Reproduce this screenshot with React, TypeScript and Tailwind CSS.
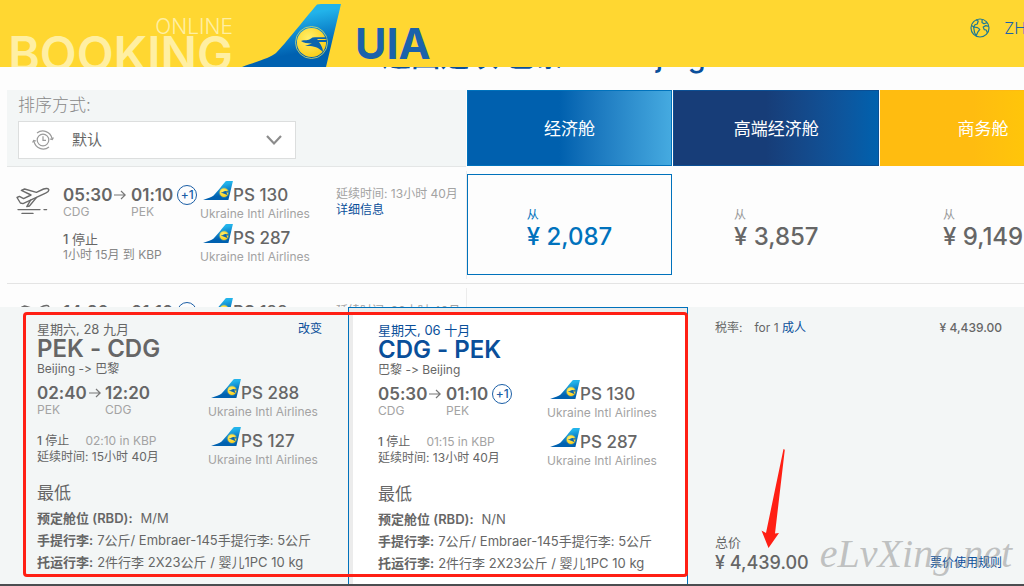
import type { ReactNode } from 'react';
import clsx from 'clsx';

type Flight = { number: string };

type Leg = {
    depart: string;
    from: string;
    arrive: string;
    to: string;
    plusDays?: string;
};

type TripLeg = Leg & {
    date: string;
    fromCity: string;
    toCity: string;
    stopTime: string;
    duration: string;
    flights: Flight[];
    rbd: string;
    active?: boolean;
};

const trips: TripLeg[] = [
    {
        date: '星期六, 28 九月',
        from: 'PEK',
        to: 'CDG',
        fromCity: 'Beijing',
        toCity: '巴黎',
        depart: '02:40',
        arrive: '12:20',
        stopTime: '02:10 in KBP',
        duration: '15小时 40月',
        flights: [{ number: 'PS 288' }, { number: 'PS 127' }],
        rbd: 'M/M',
    },
    {
        date: '星期天, 06 十月',
        from: 'CDG',
        to: 'PEK',
        fromCity: '巴黎',
        toCity: 'Beijing',
        depart: '05:30',
        arrive: '01:10',
        plusDays: '+1',
        stopTime: '01:15 in KBP',
        duration: '13小时 40月',
        flights: [{ number: 'PS 130' }, { number: 'PS 287' }],
        rbd: 'N/N',
        active: true,
    },
];

const results = [
    {
        leg: { depart: '05:30', from: 'CDG', arrive: '01:10', to: 'PEK', plusDays: '+1' },
        stop: '1小时 15月 到 KBP',
        duration: '13小时 40月',
        flights: [{ number: 'PS 130' }, { number: 'PS 287' }],
        prices: ['2,087', '3,857', '9,149'],
        selected: 0,
    },
    {
        leg: { depart: '14:20', from: 'CDG', arrive: '01:10', to: 'PEK', plusDays: '+2' },
        stop: '15小时 55月 到 KBP',
        duration: '28小时 40月',
        flights: [{ number: 'PS 128' }, { number: 'PS 287' }],
        prices: ['2,087', '3,857', '9,149'],
        selected: -1,
    },
];

const resultGrid = 'grid grid-cols-[459fr_206fr_206fr_206fr] gap-x-px';

function TailLogo({ className }: { className?: string }) {
    return (
        <svg viewBox="0 0 99 63" className={className} aria-hidden="true">
            <defs>
                <linearGradient id="tail" x1="0.45" y1="0" x2="0.75" y2="1">
                    <stop offset="0.2" stopColor="#22b3ea" />
                    <stop offset="0.55" stopColor="#0a7cc6" />
                    <stop offset="0.75" stopColor="#0061b0" />
                </linearGradient>
                <radialGradient id="ball" cx="0.4" cy="0.35" r="0.8">
                    <stop offset="0" stopColor="#fff06a" />
                    <stop offset="1" stopColor="#fbc70a" />
                </radialGradient>
            </defs>
            <path d="M75 0.5 Q77 0 79 0 H99 L84 63 H0 C16 57 28 54 34 49 C44 39 60 18 75 0.5Z" fill="url(#tail)" />
            <circle cx="69.5" cy="38.5" r="16" fill="none" stroke="#d9de6b" strokeWidth="0.8" />
            <circle cx="69.5" cy="38.5" r="14.6" fill="url(#ball)" />
            <path
                d="M59 37 C63 35.5 66 37 69 34.5 Q70 33.3 73 33.3 H84.5 V35 H76 L75 36 H84.8 V38 H77 C79 41 81 44 81 48 C76 42.5 70 41.5 63 42 L70 39.4 C66 39.5 62 39 59 37Z"
                fill="#0a64ad"
            />
        </svg>
    );
}

function GlobeIcon() {
    return (
        <svg viewBox="0 0 20 20" className="size-5 shrink-0" fill="none" stroke="#1f7a93" strokeWidth="1.2" strokeLinejoin="round" aria-hidden="true">
            <circle cx="10" cy="10" r="9" />
            <path d="M6.2 2 L8.2 3 L7.3 6 L5 6.8 L4 8.8 L1.3 7.6" />
            <path d="M3.6 9 L7.6 9.6 L9.8 11.4 L7.6 14.4 L6.2 17.8 L4.6 14.8 Z" />
            <path d="M12.2 1.4 L12 4.4 L14 5.8 L17 4.6 M18.8 8.4 L15.8 7.6 L13.2 9 L14.2 11.6 L16.2 12 L17.4 14.8" />
        </svg>
    );
}

function ClockIcon() {
    return (
        <svg viewBox="0 0 22 22" className="pointer-events-none absolute left-[14px] top-2 size-[22px]" fill="none" stroke="#9b9b9b" strokeWidth="1.2" aria-hidden="true">
            <circle cx="11" cy="11" r="5.8" />
            <path d="M11 7.2 V11.4 H14" />
            <path d="M5 4 A9.4 9.4 0 0 1 20 9.6 M18 10 L20.3 10.6 L21.4 8.4" />
            <path d="M17 18 A9.4 9.4 0 0 1 2 12.4 M0.6 13.6 L1.7 11.4 L4 12" />
        </svg>
    );
}

function PlaneIcon() {
    return (
        <svg viewBox="0 0 34 28" className="mt-5 h-7 w-[34px] shrink-0" fill="none" stroke="#6b6b6b" strokeWidth="1.4" strokeLinejoin="round" strokeLinecap="round" aria-hidden="true">
            <path d="M1 10.5 L3.4 9.4 L7.6 11.6 L15 8 L5.4 3.4 L8.6 2 L20.4 5.4 L27.6 2 C30 1 32.4 1.4 32.8 2.6 C33.2 4 31.4 5.2 29.6 6.2 L7 16.6 L4.4 16 Z" />
            <path d="M20.4 10.6 L13.4 19 L10.8 19.6 L14.6 13.2" />
            <path d="M2 22.6 H24 M28 22.6 H30.6 M6 26.4 H17" />
        </svg>
    );
}

function Arrow() {
    return (
        <svg viewBox="0 0 12 10" className="h-2.5 w-3" fill="none" stroke="#777" strokeWidth="1.2" aria-hidden="true">
            <path d="M0 5 H11 M7 1 L11.2 5 L7 9" />
        </svg>
    );
}

function LegTimes({ leg }: { leg: Leg }) {
    return (
        <div className="grid grid-cols-[68px_1fr]">
            <div className="flex items-center gap-0.5 text-[17px] font-semibold leading-5">
                {leg.depart}
                <Arrow />
            </div>
            <div className="flex h-5 items-center gap-1 text-[17px] font-semibold leading-5">
                {leg.arrive}
                {leg.plusDays && (
                    <span className="flex size-5 shrink-0 items-center justify-center rounded-full border border-[#1a5ea6] text-xs font-medium text-[#1a5ea6]">
                        {leg.plusDays}
                    </span>
                )}
            </div>
            <div className="text-xs leading-[14px] text-[#a3a3a3]">{leg.from}</div>
            <div className="text-xs leading-[14px] text-[#a3a3a3]">{leg.to}</div>
        </div>
    );
}

function FlightNumber({ number }: Flight) {
    return (
        <div>
            <div className="flex h-6 items-end pl-[3px]">
                <TailLogo className="h-[19px] w-[30px] shrink-0 self-start" />
                <span className="whitespace-nowrap text-[17px] font-medium leading-5">{number}</span>
            </div>
            <div className="whitespace-nowrap text-xs leading-[18px] text-[#a3a3a3]">Ukraine Intl Airlines</div>
        </div>
    );
}

function CabinHeader({ className, children }: { className: string; children: ReactNode }) {
    return (
        <div className={clsx('mb-px flex items-center justify-center border pt-1 text-[17px] text-white', className)}>
            {children}
        </div>
    );
}

function PriceButton({ price, selected }: { price: string; selected: boolean }) {
    return (
        <button
            type="button"
            className={clsx(
                'my-[7px] flex h-[101px] items-center justify-center border pt-2 text-left',
                selected ? 'border-[#0072bc] text-[#0072bc]' : 'border-transparent text-[#666]',
            )}
        >
            <span>
                <span className={clsx('block text-xs leading-4', !selected && 'text-[#999]')}>从</span>
                <span className="block whitespace-pre text-2xl font-medium leading-7">¥ {price}</span>
            </span>
        </button>
    );
}

function TripSummary({ trip }: { trip: TripLeg }) {
    return (
        <section
            className={clsx(
                'pb-2.5 pr-[26px]',
                trip.active
                    ? 'border-x border-t border-[#0072bc] bg-white pl-[29px] shadow-[inset_4px_6px_0_#ececec]'
                    : 'pl-[37px]',
            )}
        >
            <div className="flex justify-between pt-3.5 text-[13px] leading-4">
                <span className={clsx(trip.active && 'text-[#0a4f9a]')}>{trip.date}</span>
                {!trip.active && (
                    <a href="#change" className="text-xs leading-4 text-[#0a4f9a]">
                        改变
                    </a>
                )}
            </div>
            <h2 className={clsx('text-2xl font-semibold leading-6', trip.active && 'text-[#0a4f9a]')}>
                {trip.from} - {trip.to}
            </h2>
            <p className="text-xs leading-4">
                {trip.fromCity} -&gt; {trip.toCity}
            </p>
            <div className="flex justify-between">
                <div className="pt-1.5">
                    <LegTimes leg={trip} />
                    <div className="mt-4 flex gap-4 text-xs leading-4">
                        <span>
                            <span className="font-medium">1</span> 停止
                        </span>
                        <span className="text-[#a3a3a3]">{trip.stopTime}</span>
                    </div>
                    <div className="text-xs leading-4">延续时间: {trip.duration}</div>
                </div>
                <div className="flex w-[114px] flex-col gap-1.5 pt-0.5">
                    {trip.flights.map((flight) => (
                        <FlightNumber key={flight.number} number={flight.number} />
                    ))}
                </div>
            </div>
            <h3 className="mt-3 text-[17px] leading-6">最低</h3>
            <dl className="mt-0.5 text-[13px] leading-[22px]">
                <div className="flex gap-2">
                    <dt className="font-semibold">预定舱位 (RBD):</dt>
                    <dd>{trip.rbd}</dd>
                </div>
                <div className="flex gap-1 whitespace-nowrap">
                    <dt className="font-semibold">手提行李:</dt>
                    <dd>7公斤/ Embraer-145手提行李: 5公斤</dd>
                </div>
                <div className="flex gap-1 whitespace-nowrap">
                    <dt className="font-semibold">托运行李:</dt>
                    <dd>2件行李 2X23公斤 / 婴儿1PC 10 kg</dd>
                </div>
            </dl>
        </section>
    );
}

export default function App() {
    return (
        <div className="relative flex h-screen flex-col overflow-hidden bg-[#fdfdfd] font-['Inter','Noto_Sans_CJK_SC',sans-serif] text-[#666] [font-variant-ligatures:no-contextual]">
            <header className="flex h-[67px] shrink-0 overflow-hidden bg-[#ffd731]">
                <div className="w-[242px] shrink-0 pl-2 pr-[9px] pt-[17px] text-[#ffefa3]">
                    <div className="text-right text-[21px] font-light leading-5">ONLINE</div>
                    <div className="text-right text-[48px] font-semibold leading-[34px]">BOOKING</div>
                </div>
                <TailLogo className="mt-1 h-[63px] w-[99px] shrink-0" />
                <div className="pl-3.5 pt-[23px] text-[43px] font-bold leading-10 text-[#1b62ab]">UIA</div>
                <button type="button" className="-mr-0.5 ml-auto flex h-14 items-center gap-3.5 text-base font-light text-[#1b62ab]">
                    <GlobeIcon />
                    ZH
                </button>
            </header>

            <main className="min-h-0 flex-1 overflow-hidden">
                <h1 className="-mt-7 whitespace-nowrap pl-16 text-center text-[29px] font-medium leading-9 text-[#0a4f9a]">
                    返回选项 巴黎 -&gt; Beijing
                </h1>
                <div className="ml-[7px] mt-[15px] min-w-[1079px]">
                    <div className={clsx(resultGrid, 'h-[77px]')}>
                        <div className="border-b border-[#e4e6e6] bg-[#f3f6f6] pl-[11px] pt-1">
                            <label htmlFor="sort" className="block text-[17px] font-light leading-[22px] text-[#888]">
                                排序方式:
                            </label>
                            <div className="relative mt-[5px] w-[278px]">
                                <select
                                    id="sort"
                                    className="h-[38px] w-full appearance-none border border-[#dcdede] bg-white pl-[53px] text-[15px] text-[#666] outline-none"
                                >
                                    <option>默认</option>
                                </select>
                                <ClockIcon />
                                <svg viewBox="0 0 16 10" className="pointer-events-none absolute right-3.5 top-3.5 h-2.5 w-4" fill="none" stroke="#8c8c8c" strokeWidth="2.2" aria-hidden="true">
                                    <path d="M1 1 L8 8.4 L15 1" />
                                </svg>
                            </div>
                        </div>
                        <CabinHeader className="border-[#0072bc] bg-linear-to-r from-[#0060ae] from-45% to-[#45aae0]">经济舱</CabinHeader>
                        <CabinHeader className="border-[#0b4f94] bg-linear-to-r from-[#173d78] from-45% to-[#0061ae]">高端经济舱</CabinHeader>
                        <CabinHeader className="border-[#ffbc10] bg-linear-to-r from-[#ffbc10] from-45% to-[#ffd000]">商务舱</CabinHeader>
                    </div>
                    {results.map((row) => (
                        <div key={row.leg.depart} className={clsx(resultGrid, 'h-[117px] border-b border-[#e4e4e4]')}>
                            <div className="my-1 -mr-px flex border-r border-[#ececec] pl-[9px]">
                                <div className="-mt-1 flex w-full">
                                    <PlaneIcon />
                                    <div className="ml-[13px] w-[137px] shrink-0 pt-[18px]">
                                        <LegTimes leg={row.leg} />
                                        <div className="mt-3 text-[13px] leading-4">
                                            <span className="font-medium">1</span> 停止
                                        </div>
                                        <div className="text-xs leading-4 text-[#888]">{row.stop}</div>
                                    </div>
                                    <div className="flex w-[136px] shrink-0 flex-col gap-px pt-3.5">
                                        {row.flights.map((flight) => (
                                            <FlightNumber key={flight.number} number={flight.number} />
                                        ))}
                                    </div>
                                    <div className="whitespace-nowrap pt-[19px] text-xs leading-4 text-[#a3a3a3]">
                                        延续时间: {row.duration}
                                        <a href="#details" className="block text-[#0a4f9a]">
                                            详细信息
                                        </a>
                                    </div>
                                </div>
                            </div>
                            {row.prices.map((price, i) => (
                                <PriceButton key={price} price={price} selected={row.selected === i} />
                            ))}
                        </div>
                    ))}
                </div>
            </main>

            <footer className="relative grid shrink-0 grid-cols-[348fr_340fr_336fr] border-b-2 border-[#4b4d50] bg-[#f3f6f6]">
                {trips.map((trip) => (
                    <TripSummary key={trip.date} trip={trip} />
                ))}
                <section className="flex flex-col justify-between pb-2.5 pl-[27px] pr-[22px] pt-[13px]">
                    <div className="flex justify-between text-xs leading-4">
                        <span className="flex gap-3">
                            <span>税率:</span>
                            <span>
                                for 1{' '}
                                <a href="#passengers" className="text-[#0a4f9a]">
                                    成人
                                </a>
                            </span>
                        </span>
                        <span className="font-medium">¥ 4,439.00</span>
                    </div>
                    <div>
                        <div className="text-[13px] leading-5">总价</div>
                        <div className="flex items-center justify-between">
                            <strong className="text-lg font-medium leading-[22px]">¥ 4,439.00</strong>
                            <a href="#rules" className="text-xs leading-4 text-[#0a4f9a]">
                                票价使用规则
                            </a>
                        </div>
                    </div>
                </section>

                {/* highlight frame and pointer laid over the summary */}
                <div className="pointer-events-none absolute bottom-[7px] left-[23px] right-[336px] top-[5px] rounded border-[3px] border-[#ff1f14]" />
                <svg viewBox="0 0 24 99" className="pointer-events-none absolute bottom-9 right-[239px] h-[99px] w-6" aria-hidden="true">
                    <path d="M22.5 0 L23.8 0.8 L14 84.5 L18 84 L7.5 99 L0.5 81.5 L5 84 Z" fill="#ff1f14" />
                </svg>
                <div className="pointer-events-none absolute bottom-2.5 right-3 font-['Liberation_Serif',serif] text-[40px] italic leading-10 text-[#8c8c8c]/50">
                    eLvXing.net
                </div>
            </footer>
        </div>
    );
}
